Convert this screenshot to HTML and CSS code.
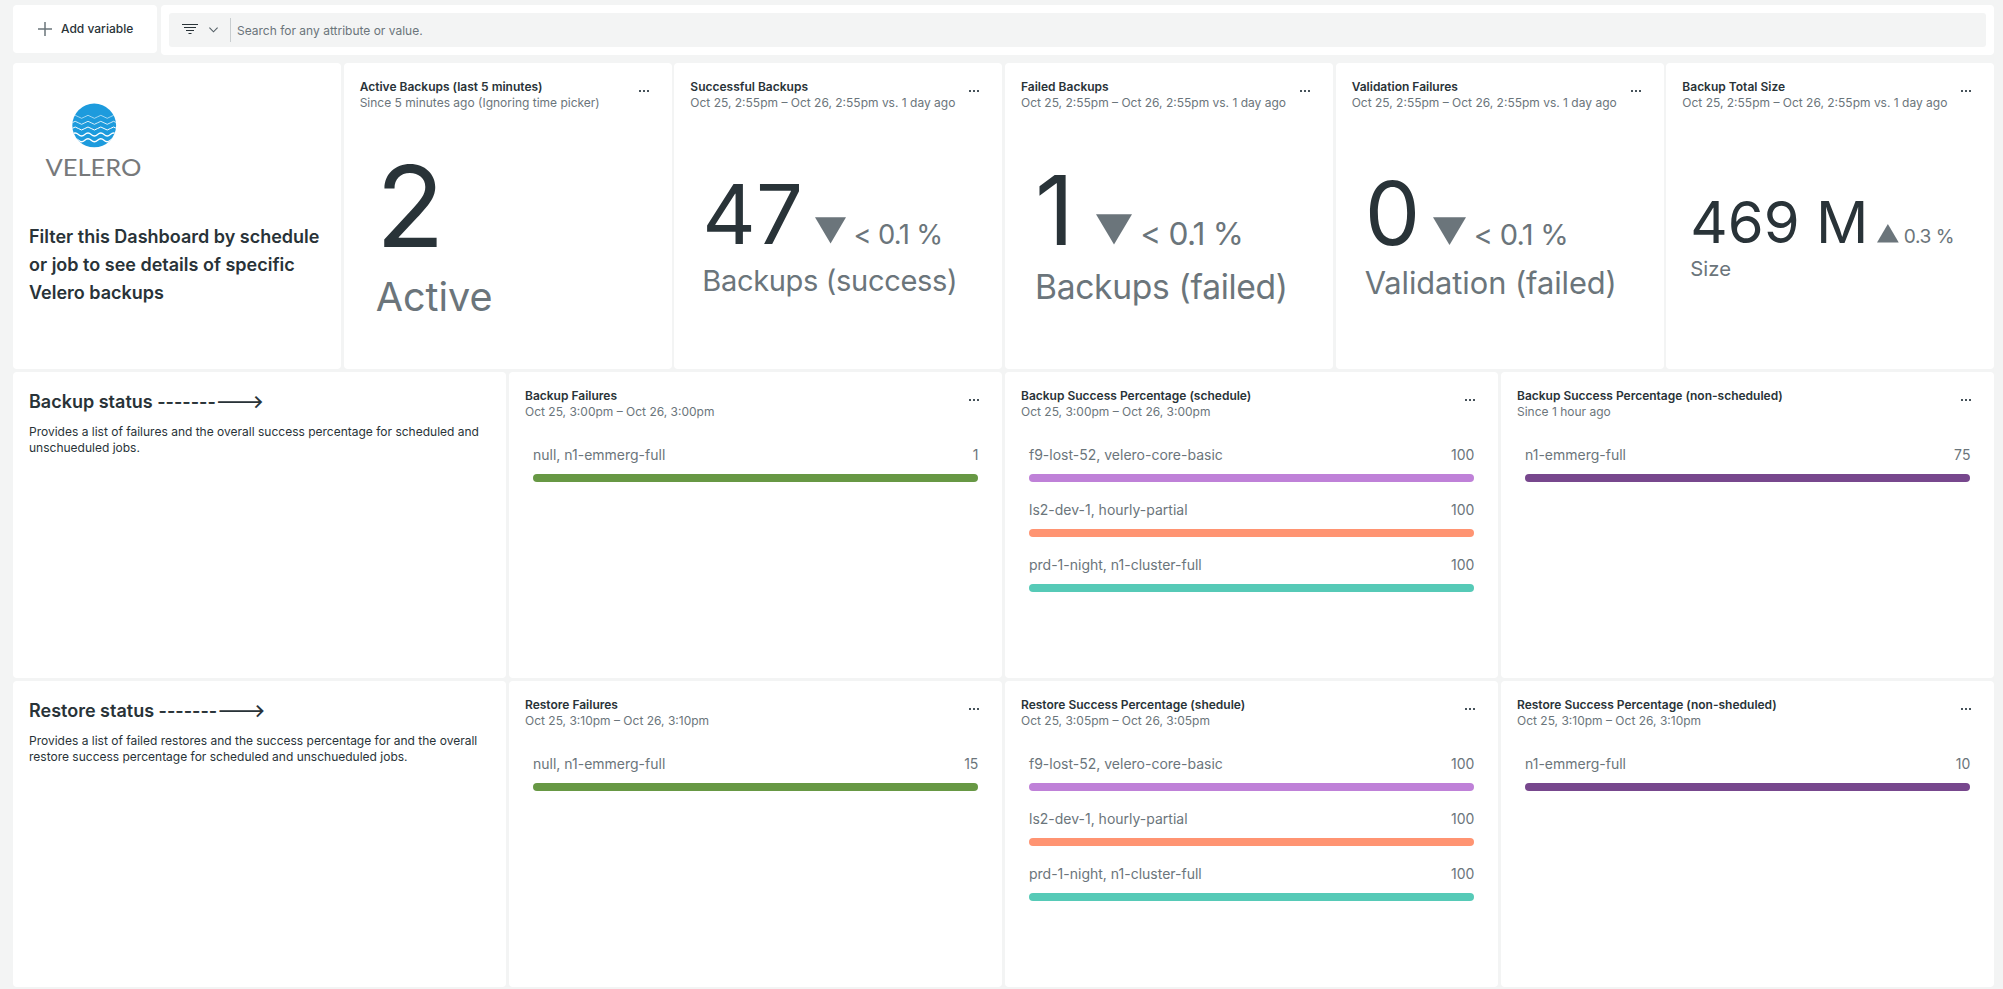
FILE: index.html
```html
<!DOCTYPE html>
<html lang="en">
<head>
<meta charset="utf-8">
<title>Velero Dashboard</title>
<link rel="stylesheet" href="styles.css">
</head>
<body>
<header class="toolbar">
  <button class="add-variable">
    <svg class="plus" width="14" height="14" viewBox="0 0 14 14"><path d="M7 0v14M0 7h14"/></svg>
    <span>Add variable</span>
  </button>
  <div class="search">
    <div class="search-field">
      <svg class="filter" width="16" height="10" viewBox="0 0 16 10"><path d="M0 .5h16M2 3.500h12M4 6.500h8M6.500 9.500h3"/></svg>
      <svg class="chevron" width="9" height="6" viewBox="0 0 9 6"><path d="M.4.6 4.500 4.800 8.600.6"/></svg>
      <span class="divider"></span>
      <span class="placeholder">Search for any attribute or value.</span>
    </div>
  </div>
</header>
<main class="grid">
  <section class="panel narrow intro">
    <svg class="logo" width="98" height="84" viewBox="0 0 98 84">
      <defs><clipPath id="disc"><circle cx="49.200" cy="22.400" r="21.900"/></clipPath></defs>
      <circle class="disc" cx="49.200" cy="22.400" r="21.900"/>
      <g class="waves" clip-path="url(#disc)">
        <path stroke-width=".6" d="M27 13.800q3.200-3 6.400 0t6.400 0t6.400 0t6.400 0t6.400 0t6.400 0t6.400 0"/>
        <path stroke-width=".8" d="M27 19.800q3.200-3 6.400 0t6.400 0t6.400 0t6.400 0t6.400 0t6.400 0t6.400 0"/>
        <path stroke-width="1" d="M27 25.500q3.200-3 6.400 0t6.400 0t6.400 0t6.400 0t6.400 0t6.400 0t6.400 0"/>
        <path stroke-width="1.200" d="M27 31.500q3.200-3 6.400 0t6.400 0t6.400 0t6.400 0t6.400 0t6.400 0t6.400 0"/>
        <path stroke-width="1.400" d="M27 37.300q3.200-3 6.400 0t6.400 0t6.400 0t6.400 0t6.400 0t6.400 0t6.400 0"/>
      </g>
      <text class="wordmark" x=".5" y="72.600" textLength="96" lengthAdjust="spacingAndGlyphs">VELERO</text>
    </svg>
    <h2 class="intro-text">Filter this Dashboard by schedule or job to see details of specific Velero backups</h2>
  </section>
  <section class="panel narrow">
    <div class="head"><h3>Active Backups (last 5 minutes)</h3><p>Since 5 minutes ago (Ignoring time picker)</p><span class="more"><i></i><i></i><i></i></span></div>
    <div class="billboard b-active"><div class="value"><b>2</b></div><div class="label">Active</div></div>
  </section>
  <section class="panel narrow">
    <div class="head"><h3>Successful Backups</h3><p>Oct 25, 2:55pm – Oct 26, 2:55pm vs. 1 day ago</p><span class="more"><i></i><i></i><i></i></span></div>
    <div class="billboard b-success"><div class="value"><b>47</b><svg class="tri" viewBox="0 0 32 27"><path d="M0 0h32L16 27z"/></svg><span>&lt; 0.1 %</span></div><div class="label">Backups (success)</div></div>
  </section>
  <section class="panel narrow">
    <div class="head"><h3>Failed Backups</h3><p>Oct 25, 2:55pm – Oct 26, 2:55pm vs. 1 day ago</p><span class="more"><i></i><i></i><i></i></span></div>
    <div class="billboard b-failed"><div class="value"><b>1</b><svg class="tri" viewBox="0 0 32 27"><path d="M0 0h32L16 27z"/></svg><span>&lt; 0.1 %</span></div><div class="label">Backups (failed)</div></div>
  </section>
  <section class="panel narrow">
    <div class="head"><h3>Validation Failures</h3><p>Oct 25, 2:55pm – Oct 26, 2:55pm vs. 1 day ago</p><span class="more"><i></i><i></i><i></i></span></div>
    <div class="billboard b-validation"><div class="value"><b>0</b><svg class="tri" viewBox="0 0 32 27"><path d="M0 0h32L16 27z"/></svg><span>&lt; 0.1 %</span></div><div class="label">Validation (failed)</div></div>
  </section>
  <section class="panel narrow">
    <div class="head"><h3>Backup Total Size</h3><p>Oct 25, 2:55pm – Oct 26, 2:55pm vs. 1 day ago</p><span class="more"><i></i><i></i><i></i></span></div>
    <div class="billboard b-size"><div class="value"><b>469 M</b><svg class="tri" viewBox="0 0 32 27"><path d="M0 27h32L16 0z"/></svg><span>0.3 %</span></div><div class="label">Size</div></div>
  </section>

  <section class="panel wide note">
    <h2>Backup status ----------&gt;</h2>
    <p>Provides a list of failures and the overall success percentage for scheduled and unschueduled jobs.</p>
  </section>
  <section class="panel wide">
    <div class="head"><h3>Backup Failures</h3><p>Oct 25, 3:00pm – Oct 26, 3:00pm</p><span class="more"><i></i><i></i><i></i></span></div>
    <ul class="bars">
      <li><span>null, n1-emmerg-full</span><span>1</span><div class="bar green"></div></li>
    </ul>
  </section>
  <section class="panel wide">
    <div class="head"><h3>Backup Success Percentage (schedule)</h3><p>Oct 25, 3:00pm – Oct 26, 3:00pm</p><span class="more"><i></i><i></i><i></i></span></div>
    <ul class="bars">
      <li><span>f9-lost-52, velero-core-basic</span><span>100</span><div class="bar lilac"></div></li>
      <li><span>ls2-dev-1, hourly-partial</span><span>100</span><div class="bar coral"></div></li>
      <li><span>prd-1-night, n1-cluster-full</span><span>100</span><div class="bar teal"></div></li>
    </ul>
  </section>
  <section class="panel wide">
    <div class="head"><h3>Backup Success Percentage (non-scheduled)</h3><p>Since 1 hour ago</p><span class="more"><i></i><i></i><i></i></span></div>
    <ul class="bars">
      <li><span>n1-emmerg-full</span><span>75</span><div class="bar purple"></div></li>
    </ul>
  </section>

  <section class="panel wide note">
    <h2>Restore status ----------&gt;</h2>
    <p>Provides a list of failed restores and the success percentage for and the overall restore success percentage for scheduled and unschueduled jobs.</p>
  </section>
  <section class="panel wide">
    <div class="head"><h3>Restore Failures</h3><p>Oct 25, 3:10pm – Oct 26, 3:10pm</p><span class="more"><i></i><i></i><i></i></span></div>
    <ul class="bars">
      <li><span>null, n1-emmerg-full</span><span>15</span><div class="bar green"></div></li>
    </ul>
  </section>
  <section class="panel wide">
    <div class="head"><h3>Restore Success Percentage (shedule)</h3><p>Oct 25, 3:05pm – Oct 26, 3:05pm</p><span class="more"><i></i><i></i><i></i></span></div>
    <ul class="bars">
      <li><span>f9-lost-52, velero-core-basic</span><span>100</span><div class="bar lilac"></div></li>
      <li><span>ls2-dev-1, hourly-partial</span><span>100</span><div class="bar coral"></div></li>
      <li><span>prd-1-night, n1-cluster-full</span><span>100</span><div class="bar teal"></div></li>
    </ul>
  </section>
  <section class="panel wide">
    <div class="head"><h3>Restore Success Percentage (non-sheduled)</h3><p>Oct 25, 3:10pm – Oct 26, 3:10pm</p><span class="more"><i></i><i></i><i></i></span></div>
    <ul class="bars">
      <li><span>n1-emmerg-full</span><span>10</span><div class="bar purple"></div></li>
    </ul>
  </section>
</main>
</body>
</html>
```

FILE: styles.css
```css
* { box-sizing: border-box; margin: 0; padding: 0; }
body {
  background: #f3f4f4;
  color: #293338;
  font: 12px/16px Inter, "Liberation Sans", sans-serif;
  padding: 5px 8.600px 0 13px;
  height: 989px;
  overflow: hidden;
}
.toolbar { display: flex; align-items: flex-start; gap: 4px; height: 58px; }
.add-variable {
  display: flex; align-items: center; gap: 9px;
  width: 144px; height: 48px; padding-left: 25px;
  background: #fff; border: 0; border-radius: 4px;
  font: 500 12px/16px Inter, sans-serif; color: #293338;
}
.plus { stroke: #6b757b; stroke-width: 1.500; fill: none; }
.search { flex: 1; height: 50px; padding: 8px; background: #fff; border-radius: 4px; }
.search-field {
  display: flex; align-items: center; height: 34px; padding-left: 13px;
  background: #f3f4f4; border-radius: 3px;
}
.filter { stroke: #293338; stroke-width: 1; fill: none; margin-top: -2px; }
.chevron { stroke: #535e65; stroke-width: 1.100; fill: none; margin: -1px 0 0 11px; }
.divider { width: 1px; height: 24px; margin: 0 6px 0 12px; background: #c8cdcf; }
.placeholder { color: #6b757b; margin-top: 1px; }

.grid {
  display: grid; grid-template-columns: repeat(12, 1fr);
  grid-auto-rows: 306px; column-gap: 2.600px; row-gap: 3px;
}
.panel { background: #fff; border-radius: 4px; padding: 16px; min-width: 0; }
.narrow { grid-column: span 2; }
.wide { grid-column: span 3; }
.head { position: relative; height: 32px; white-space: nowrap; }
h3 { font-size: 12px; line-height: 16px; font-weight: 600; }
.head p { color: #6b757b; }
.more { position: absolute; right: 7px; top: 11px; display: flex; gap: 2px; }
.more i { width: 2px; height: 2px; background: #46525a; }

.intro { padding-top: 40px; }
.logo { display: block; margin-left: 16px; }
.disc { fill: #1d9bdd; }
.waves { stroke: #fff; fill: none; }
.wordmark { font: 400 24px Lato, sans-serif; fill: #77797b; }
.intro-text { margin-top: 36px; font-size: 18px; line-height: 28px; font-weight: 600; }

.note h2 { font-size: 18px; line-height: 28px; font-weight: 600; }
.note p { margin-top: 8px; }

.billboard { --size: 80px; font-size: var(--size); white-space: nowrap; }
.value { display: flex; align-items: baseline; line-height: 1; color: #293338; }
.value b { font-weight: 440; }
.value span { font-size: .33em; letter-spacing: -.025em; color: #6b757b; }
.tri { width: .375em; height: .32em; fill: #6b757b; margin: 0 .085em 0 .15em; }
.label { font-size: .35em; line-height: 1.200; color: #6b757b; margin-top: .27em; }
.b-active { --size: 113px; padding: 39px 0 0 16px; }
.b-success { --size: 83px; padding: 62px 0 0 12px; }
.b-success .label { letter-spacing: -.012em; }
.b-failed { --size: 96px; padding: 51px 0 0 14px; }
.b-failed .label { letter-spacing: -.009em; }
.b-failed .tri { margin-left: .23em; }
.b-validation { --size: 88px; padding: 58px 0 0 13px; }
.b-validation .label { letter-spacing: -.002em; }
.b-size { --size: 58px; padding: 82px 0 0 8px; }
.b-size .label { margin-top: .31em; }

.bars { list-style: none; padding: 24px 8px 0; }
.bars li {
  display: grid; grid-template-columns: 1fr auto; row-gap: 8px;
  height: 55px; align-content: start;
  font-size: 14px; line-height: 22px; color: #6b757b;
}
.bar { grid-column: span 2; height: 8px; border-radius: 4px; }
.green { background: #679844; }
.lilac { background: #bf81d8; }
.coral { background: #ff9472; }
.teal { background: #56cab7; }
.purple { background: #77478d; }
```
